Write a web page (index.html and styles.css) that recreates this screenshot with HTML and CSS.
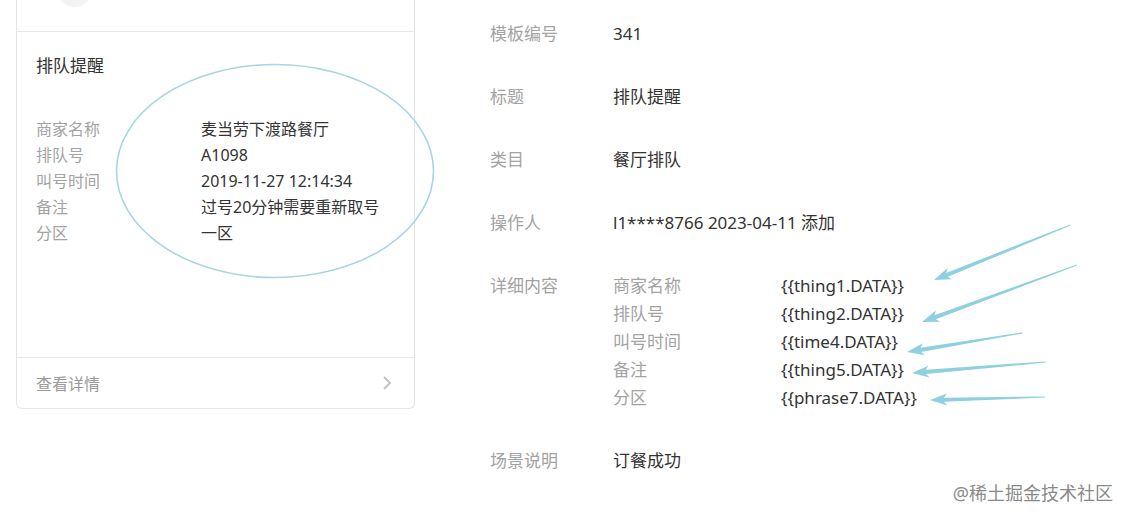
FILE: index.html
```html
<!DOCTYPE html>
<html lang="zh-CN">
<head>
    <meta charset="UTF-8">
    <title>模板详情</title>
    <link rel="stylesheet" href="styles.css">
</head>
<body>

<div class="page">
    <!-- message preview card -->
    <div class="card">
        <div class="card-head">
            <div class="avatar"></div>
        </div>
        <div class="card-body">
            <div class="card-title">排队提醒</div>
            <div class="card-rows">
                <div class="k">商家名称</div><div class="v">麦当劳下渡路餐厅</div>
                <div class="k">排队号</div><div class="v">A1098</div>
                <div class="k">叫号时间</div><div class="v">2019-11-27 12:14:34</div>
                <div class="k">备注</div><div class="v">过号20分钟需要重新取号</div>
                <div class="k">分区</div><div class="v">一区</div>
            </div>
        </div>
        <div class="card-foot">
            <span>查看详情</span>
            <svg class="chevron" width="10" height="16" viewBox="0 0 10 16">
                <path d="M2 2 L8 8 L2 14" fill="none" stroke="#c4c4c4" stroke-width="2"/>
            </svg>
        </div>
        <svg class="ring" width="322" height="218" viewBox="0 0 322 218">
            <ellipse cx="161" cy="109" rx="158.5" ry="106.5" fill="none" stroke="#a6d7de" stroke-width="1.6"/>
        </svg>
    </div>

    <!-- template info -->
    <div class="info">
        <div class="label">模板编号</div><div class="value">341</div>
        <div class="label">标题</div><div class="value">排队提醒</div>
        <div class="label">类目</div><div class="value">餐厅排队</div>
        <div class="label">操作人</div><div class="value">l1****8766 2023-04-11 添加</div>
        <div class="label">详细内容</div>
        <div class="value detail">
            <div class="k">商家名称</div><div>{{thing1.DATA}}</div>
            <div class="k">排队号</div><div>{{thing2.DATA}}</div>
            <div class="k">叫号时间</div><div>{{time4.DATA}}</div>
            <div class="k">备注</div><div>{{thing5.DATA}}</div>
            <div class="k">分区</div><div>{{phrase7.DATA}}</div>
        </div>
        <div class="label">场景说明</div><div class="value">订餐成功</div>
    </div>
</div>

<!-- hand drawn arrows -->
<svg class="arrows" width="1131" height="519" viewBox="0 0 1131 519">
    <g fill="#8fd0e0">
        <path transform="translate(934 280) rotate(-22)" d="M0 0 L17 -6 L14 -2 L147 -0.6 L147 0.6 L14 2.2 L17 6 Z"/>
        <path transform="translate(922 322) rotate(-20.2)" d="M0 0 L17 -6 L14 -2 L165 -0.6 L165 0.6 L14 2.2 L17 6 Z"/>
        <path transform="translate(907 352) rotate(-9.4)" d="M0 0 L17 -6 L14 -2 L117 -0.6 L117 0.6 L14 2.2 L17 6 Z"/>
        <path transform="translate(912 373) rotate(-4.7)" d="M0 0 L17 -6 L14 -2 L134 -0.6 L134 0.6 L14 2.2 L17 6 Z"/>
        <path transform="translate(930 400) rotate(-1.5)" d="M0 0 L17 -6 L14 -2 L115 -0.6 L115 0.6 L14 2.2 L17 6 Z"/>
    </g>
</svg>

<div class="watermark">@稀土掘金技术社区</div>

</body>
</html>
```

FILE: styles.css
```css
body {
    margin: 0;
    font-family: "Noto Sans", "Noto Sans CJK SC", sans-serif;
    background: #fff;
    color: #333;
    overflow: hidden;
}
.page {
    display: flex;
    align-items: flex-start;
    padding-left: 16px;
}
.card {
    position: relative;
    width: 397px;
    margin-top: -39px;
    border: 1px solid #e6e6e6;
    border-top: none;
    border-radius: 0 0 6px 6px;
}
.card-head {
    height: 71px;
    padding: 11px 0 0 40px;
    box-sizing: border-box;
    border-bottom: 1px solid #e8e8e8;
}
.avatar {
    width: 35px;
    height: 35px;
    border-radius: 50%;
    background: #f3f3f3;
}
.card-body {
    height: 326px;
    padding: 21px 19px 0;
    box-sizing: border-box;
    border-bottom: 1px solid #e8e8e8;
}
.card-title {
    font-size: 17px;
    line-height: 26px;
    color: #333;
    margin-bottom: 37px;
}
.card-rows {
    display: grid;
    grid-template-columns: 165px 1fr;
    font-size: 16px;
    line-height: 26px;
}
.card-rows .k {
    color: #a3a3a3;
}
.card-foot {
    height: 50px;
    display: flex;
    align-items: center;
    justify-content: space-between;
    padding: 0 22px 0 19px;
    font-size: 16px;
    color: #9a9a9a;
}
.ring {
    position: absolute;
    left: 97px;
    top: 101px;
}
.info {
    margin-left: 75px;
    padding-top: 20px;
    display: grid;
    grid-template-columns: 123px auto;
    row-gap: 35px;
    font-size: 17px;
    line-height: 28px;
}
.label {
    color: #a3a3a3;
}
.value {
    color: #333;
}
.detail {
    display: grid;
    grid-template-columns: 168px auto;
}
.detail .k {
    color: #a3a3a3;
}
.arrows {
    position: absolute;
    left: 0;
    top: 0;
    pointer-events: none;
}
.watermark {
    position: absolute;
    right: 18px;
    bottom: 14px;
    font-size: 18px;
    color: #8a8a8a;
}
```
